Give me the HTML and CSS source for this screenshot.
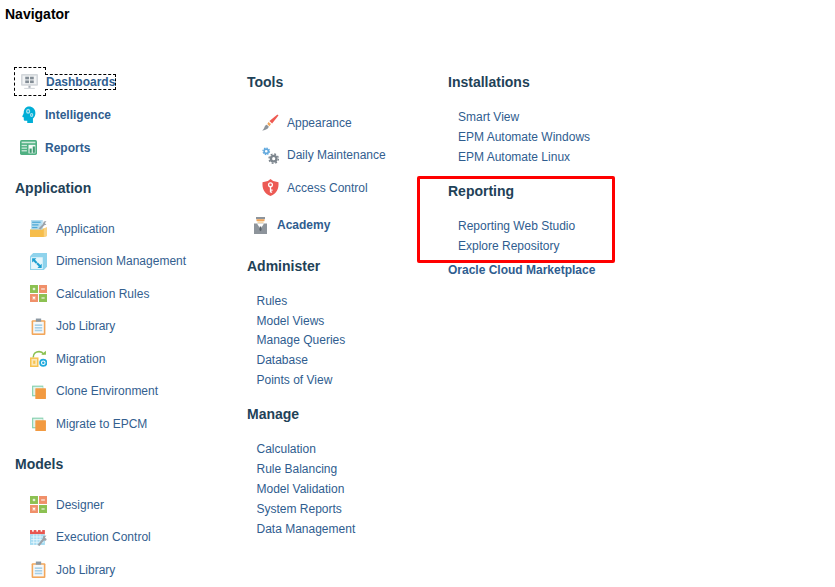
FILE: index.html
```html
<!DOCTYPE html>
<html lang="en">
<head>
<meta charset="utf-8">
<title>Navigator</title>
<link rel="stylesheet" href="styles.css">
</head>
<body>
<h1 class="title">Navigator</h1>
<main class="columns">
  <div class="col col-1">
    <ul class="cards">
      <li class="card">
        <span class="icon-focus">
          <svg class="ico" viewBox="0 0 16 16"><rect x="0" y="1" width="16" height="11" rx="1" fill="#d3d7db"/><rect x="1.500" y="2.500" width="13" height="8" fill="#f1f3f4"/><rect x="4" y="3.500" width="3.500" height="2.500" fill="#828c95"/><rect x="8.500" y="3.500" width="3.500" height="2.500" fill="#828c95"/><rect x="4" y="7" width="3.500" height="2.500" fill="#828c95"/><rect x="8.500" y="7" width="3.500" height="2.500" fill="#828c95"/><rect x="7" y="12" width="2" height="2" fill="#aab1b8"/><rect x="3" y="14" width="10" height="1" fill="#d3d7db"/></svg>
        </span>
        <a class="card-link focused" href="#">Dashboards</a>
      </li>
      <li class="card">
        <span class="icon-slot">
          <svg class="ico-head" viewBox="0 0 16 16" preserveAspectRatio="none"><path d="M8 0.500C4.500 0.500 2 3 2 6.200c0 1-.8 2.200-1.500 3.300-.3.500 0 1 .6 1H2v2c0 .9.600 1.400 1.400 1.400H6V16h6.500v-4.300c1.700-1 2.800-3 2.800-5.200C15.300 3 12 .5 8 .5z" fill="#00aed6"/><circle cx="7" cy="5" r="1.700" fill="none" stroke="#a9e2f0" stroke-width="1.400"/><circle cx="11" cy="8.400" r="1.300" fill="none" stroke="#a9e2f0" stroke-width="1.200"/></svg>
        </span>
        <a class="card-link" href="#">Intelligence</a>
      </li>
      <li class="card">
        <span class="icon-slot">
          <svg class="ico" viewBox="0 0 16 16"><rect y="1" width="16" height="14" rx="1.500" fill="#4fb082"/><rect x="1.500" y="2.500" width="13" height="1.500" fill="#cfeadc"/><rect x="1.500" y="5.500" width="5" height="1.200" fill="#cfeadc"/><rect x="1.500" y="8" width="5" height="1.200" fill="#cfeadc"/><rect x="1.500" y="10.500" width="5" height="1.200" fill="#cfeadc"/><rect x="8" y="5.500" width="6.500" height="8" fill="#f3faf6"/><rect x="9" y="9" width="2" height="4" fill="#3f9a70"/><rect x="12" y="7" width="2" height="6" fill="#3f9a70"/></svg>
        </span>
        <a class="card-link" href="#">Reports</a>
      </li>
    </ul>

    <h2 class="heading heading-app">Application</h2>
    <ul class="tasks">
      <li class="task">
        <svg class="ico" viewBox="0 0 16 16"><path d="M0 9l3-1h13v7l-3 1H0z" fill="#f6bd4b"/><path d="M13 8l3-1.500V15l-3 1z" fill="#f9d283"/><rect x="1" y="0" width="11" height="9" fill="#b7def0"/><rect x="2" y="1.500" width="8" height="1.200" fill="#4fa9d6"/><rect x="2" y="4" width="6" height="1.200" fill="#4fa9d6"/><rect x="2" y="6.500" width="5" height="1.200" fill="#4fa9d6"/><path d="M8 8l4-4 1-2.500 2.500-.5-1.500 2 1.500 1.500L13.500 5 10 9z" fill="#9ca3a9"/></svg>
        <a href="#">Application</a>
      </li>
      <li class="task">
        <svg class="ico" viewBox="0 0 16 16"><path d="M0 3l3-3h13v13l-3 3H0z" fill="#8fd3ec"/><rect x="1" y="4" width="11" height="11" fill="#e6f6fb"/><path d="M2 5h4L4.700 6.300 7 8.600 5.600 10 3.300 7.700 2 9zM11 14H7l1.300-1.300L6 10.400 7.400 9l2.300 2.300L11 10z" fill="#1c9fd0"/></svg>
        <a href="#">Dimension Management</a>
      </li>
      <li class="task">
        <svg class="ico" viewBox="0 0 16 16"><rect width="7.500" height="7.500" fill="#8cc152"/><rect x="8.500" width="7.500" height="7.500" fill="#f0906a"/><rect y="8.500" width="7.500" height="7.500" fill="#f0906a"/><rect x="8.500" y="8.500" width="7.500" height="7.500" fill="#8cc152"/><path d="M2.500 3.750h2.500M3.750 2.500v2.500M10.500 3.750h3.500M2.500 11l2.500 2.500M5 11l-2.500 2.500M10.800 12.250h3" stroke="#fff" stroke-width="1" fill="none"/></svg>
        <a href="#">Calculation Rules</a>
      </li>
      <li class="task">
        <svg class="ico" viewBox="0 0 16 16"><rect x="1.500" y="2" width="13" height="14" rx="1" fill="#f2a65a"/><rect x="3" y="3.500" width="10" height="11" fill="#f4f8fb"/><rect x="5.500" y="0.500" width="5" height="3" fill="#8d99a3"/><rect x="4.500" y="6" width="7" height="1.500" fill="#a5cfe8"/><rect x="4.500" y="8.500" width="7" height="1.500" fill="#a5cfe8"/><rect x="4.500" y="11" width="7" height="1.500" fill="#a5cfe8"/></svg>
        <a href="#">Job Library</a>
      </li>
      <li class="task">
        <svg class="ico" viewBox="0 0 16 16"><path d="M3 7C3 3 6 1.500 8.500 1.500c2 0 3.500 1 4.500 2.500" fill="none" stroke="#8cc152" stroke-width="1.500"/><path d="M10.500 4.500H15V0.800z" fill="#8cc152"/><rect x="0.700" y="7.700" width="6.600" height="7.600" fill="#fbe7b8" stroke="#f6c250" stroke-width="1.400"/><rect x="3" y="10" width="2" height="3" fill="#f6c250"/><circle cx="12.500" cy="12" r="3" fill="#fff" stroke="#1fa9dc" stroke-width="1.600"/><circle cx="12.500" cy="12" r="1.200" fill="#1fa9dc"/></svg>
        <a href="#">Migration</a>
      </li>
      <li class="task">
        <svg class="ico" viewBox="0 0 16 16"><rect x="2" y="2.500" width="10.500" height="10" fill="#7fcdaa"/><rect x="3" y="3.500" width="9" height="8" fill="#e3f4ec"/><rect x="5" y="5" width="10" height="10" rx=".5" fill="#f29a41"/></svg>
        <a href="#">Clone Environment</a>
      </li>
      <li class="task">
        <svg class="ico" viewBox="0 0 16 16"><rect x="2" y="2.500" width="10.500" height="10" fill="#7fcdaa"/><rect x="3" y="3.500" width="9" height="8" fill="#e3f4ec"/><rect x="5" y="5" width="10" height="10" rx=".5" fill="#f29a41"/></svg>
        <a href="#">Migrate to EPCM</a>
      </li>
    </ul>

    <h2 class="heading heading-app heading-models">Models</h2>
    <ul class="tasks">
      <li class="task">
        <svg class="ico" viewBox="0 0 16 16"><rect width="7.500" height="7.500" fill="#8cc152"/><rect x="8.500" width="7.500" height="7.500" fill="#f0906a"/><rect y="8.500" width="7.500" height="7.500" fill="#f0906a"/><rect x="8.500" y="8.500" width="7.500" height="7.500" fill="#8cc152"/><path d="M2.500 3.750h2.500M3.750 2.500v2.500M10.500 3.750h3.500M2.500 11l2.500 2.500M5 11l-2.500 2.500M10.800 12.250h3" stroke="#fff" stroke-width="1" fill="none"/></svg>
        <a href="#">Designer</a>
      </li>
      <li class="task">
        <svg class="ico" viewBox="0 0 16 16"><rect y="1" width="14" height="4" fill="#e8564f"/><rect y="5" width="14" height="10" fill="#a5dcf3"/><path d="M1 7.500h12M1 10h12M1 12.500h12M3.500 5v10M6.500 5v10M9.500 5v10" stroke="#e9f7fc" stroke-width=".8"/><rect x="2" y="0" width="1.500" height="2.500" fill="#fff"/><rect x="6" y="0" width="1.500" height="2.500" fill="#fff"/><rect x="10" y="0" width="1.500" height="2.500" fill="#fff"/><path d="M7 15l5-6 .5-2.500L15.500 6 14 8l1.500 1.500 .5-.5-1 2-2-.2L9 16z" fill="#9ca3a9"/></svg>
        <a href="#">Execution Control</a>
      </li>
      <li class="task">
        <svg class="ico" viewBox="0 0 16 16"><rect x="1.500" y="2" width="13" height="14" rx="1" fill="#f2a65a"/><rect x="3" y="3.500" width="10" height="11" fill="#f4f8fb"/><rect x="5.500" y="0.500" width="5" height="3" fill="#8d99a3"/><rect x="4.500" y="6" width="7" height="1.500" fill="#a5cfe8"/><rect x="4.500" y="8.500" width="7" height="1.500" fill="#a5cfe8"/><rect x="4.500" y="11" width="7" height="1.500" fill="#a5cfe8"/></svg>
        <a href="#">Job Library</a>
      </li>
    </ul>
  </div>

  <div class="col col-2">
    <h2 class="heading">Tools</h2>
    <ul class="tasks tools">
      <li class="task">
        <svg class="ico" viewBox="0 0 16 16"><path d="M7 6.500L14.500 0.500l1 1L9.500 9z" fill="#ee5a52"/><path d="M6 7.500l2.500 2L7 11.500 5 9.500z" fill="#f2a65a"/><path d="M4.500 10l2 2c-1 2.500-4 3.500-6.500 3.500 1.500-1 2-2 2.500-3.500.3-1 1-1.800 2-2z" fill="#8d949b"/></svg>
        <a href="#">Appearance</a>
      </li>
      <li class="task">
        <svg class="ico" viewBox="0 0 16 16"><circle cx="4" cy="4" r="3.100" fill="none" stroke="#62a9de" stroke-width="1.100" stroke-dasharray="1.400 1"/><circle cx="4" cy="4" r="2" fill="none" stroke="#62a9de" stroke-width="1.500"/><circle cx="11" cy="11" r="4.400" fill="none" stroke="#7d868e" stroke-width="1.300" stroke-dasharray="1.800 1.650"/><circle cx="11" cy="11" r="2.600" fill="none" stroke="#7d868e" stroke-width="2.200"/></svg>
        <a href="#">Daily Maintenance</a>
      </li>
      <li class="task">
        <svg class="ico" viewBox="0 0 16 16"><path d="M8 0l2.500 1.800L15.500 3c.5 6-1.500 10.500-7.500 13C2 13.500 0 9 .5 3l5-1.200z" fill="#ec5a54"/><circle cx="8" cy="5.500" r="1.800" fill="none" stroke="#fff" stroke-width="1.200"/><path d="M8 7.500v5M8 10.500h2M8 12.300h1.500" stroke="#fff" stroke-width="1.200"/></svg>
        <a href="#">Access Control</a>
      </li>
    </ul>
    <div class="academy">
      <svg class="ico-academy" viewBox="0 0 13 17"><rect x="2" y="0" width="9" height="2.200" fill="#8d949b"/><rect x="2.500" y="2.200" width="8" height="2" fill="#f2a65a"/><rect x="3.500" y="4.200" width="6" height="2.300" fill="#f4d9b0"/><path d="M0 6.500h13V17H0z" fill="#8d949b"/><path d="M3 6.500h7L6.500 12z" fill="#fff"/><path d="M5.800 9.500h1.400l.4 3.500-1.100 1.200L5.400 13z" fill="#59626a"/></svg>
      <a href="#">Academy</a>
    </div>
    <h2 class="heading heading-sub">Administer</h2>
    <ul class="links links-admin">
      <li><a href="#">Rules</a></li>
      <li><a href="#">Model Views</a></li>
      <li><a href="#">Manage Queries</a></li>
      <li><a href="#">Database</a></li>
      <li><a href="#">Points of View</a></li>
    </ul>
    <h2 class="heading heading-sub">Manage</h2>
    <ul class="links links-manage">
      <li><a href="#">Calculation</a></li>
      <li><a href="#">Rule Balancing</a></li>
      <li><a href="#">Model Validation</a></li>
      <li><a href="#">System Reports</a></li>
      <li><a href="#">Data Management</a></li>
    </ul>
  </div>

  <div class="col col-3">
    <h2 class="heading">Installations</h2>
    <ul class="links links-3">
      <li><a href="#">Smart View</a></li>
      <li><a href="#">EPM Automate Windows</a></li>
      <li><a href="#">EPM Automate Linux</a></li>
    </ul>
    <section class="highlight">
      <h2 class="heading">Reporting</h2>
      <ul class="links links-3">
        <li><a href="#">Reporting Web Studio</a></li>
        <li><a href="#">Explore Repository</a></li>
      </ul>
    </section>
    <a class="market" href="#">Oracle Cloud Marketplace</a>
  </div>
</main>
</body>
</html>
```
FILE: styles.css
```css
*, *::before { box-sizing: border-box; }
html, body { margin: 0; height: 100%; overflow: hidden; }
body {
  background: #fff;
  font-family: "Liberation Sans", Arial, sans-serif;
  font-size: 12px;
  color: #2f5d8f;
  padding: 6px 0 0 5px;
}
a { color: inherit; text-decoration: none; }
ul { list-style: none; margin: 0; padding: 0; }
.title {
  margin: 0;
  font-size: 14px;
  line-height: 17px;
  font-weight: 700;
  color: #000;
}
.columns {
  display: flex;
  margin-top: 42px;
}
.col { flex: none; }
.col-1 { width: 232px; margin-left: 10px; }
.col-2 { width: 201px; margin-top: 9px; }
.col-3 { width: 200px; margin-top: 9px; }
.ico { width: 17px; height: 17px; flex: none; display: block; }
.ico-head { width: 14px; height: 17px; margin-left: 2px; flex: none; display: block; }
.cards { display: flex; flex-direction: column; }
.card {
  height: 33px;
  display: flex;
  align-items: center;
  font-weight: 700;
  font-size: 12px;
}
.icon-slot, .icon-focus {
  flex: none;
  display: flex;
  align-items: center;
}
.icon-slot { width: 30px; padding-left: 5px; }
.icon-focus {
  width: 32px;
  height: 29px;
  margin-left: -1px;
  padding-left: 6px;
  border: 1px dashed #000;
}
.focused {
  position: relative;
  margin-left: -1px;
  padding: 0 0 0 1px;
  line-height: 14px;
  background: #fff;
  border: 1px dashed #000;
  border-left: 0;
}
.heading {
  margin: 0;
  font-size: 14px;
  line-height: 17px;
  font-weight: 700;
  color: #1f4258;
}
.heading-app { margin-top: 16px; margin-bottom: 15.6px; }
.heading-models { margin-top: 16px; margin-bottom: 15.4px; }
.task {
  height: 32.5px;
  display: flex;
  align-items: center;
  gap: 9px;
  padding-left: 15px;
  color: #33608f;
}
.tools { margin-top: 15.7px; }
.tools .task { gap: 8px; }
.academy {
  height: 36px;
  margin-top: 3px;
  display: flex;
  align-items: center;
  gap: 10px;
  padding-left: 7px;
  font-weight: 700;
}
.ico-academy { width: 13px; height: 17px; flex: none; display: block; }
.heading-sub { margin-top: 15px; }
.links { margin-top: 16px; margin-left: 9.5px; }
.links li { height: 19.8px; line-height: 20px; }
.links-admin { margin-top: 15.6px; margin-bottom: 16px; }
.links-admin li { height: 19.75px; }
.links-manage { margin-top: 16.45px; }
.links-manage li { height: 20px; }
.links-3 { margin-top: 16px; margin-left: 10px; }
.highlight { position: relative; margin-top: 17px; }
.highlight::before {
  content: "";
  position: absolute;
  left: -31px;
  top: -7px;
  width: 198px;
  height: 87px;
  border: 3px solid #f00;
  border-radius: 2px;
}
.market {
  display: block;
  margin-top: 6px;
  font-weight: 700;
  line-height: 17px;
}
```
